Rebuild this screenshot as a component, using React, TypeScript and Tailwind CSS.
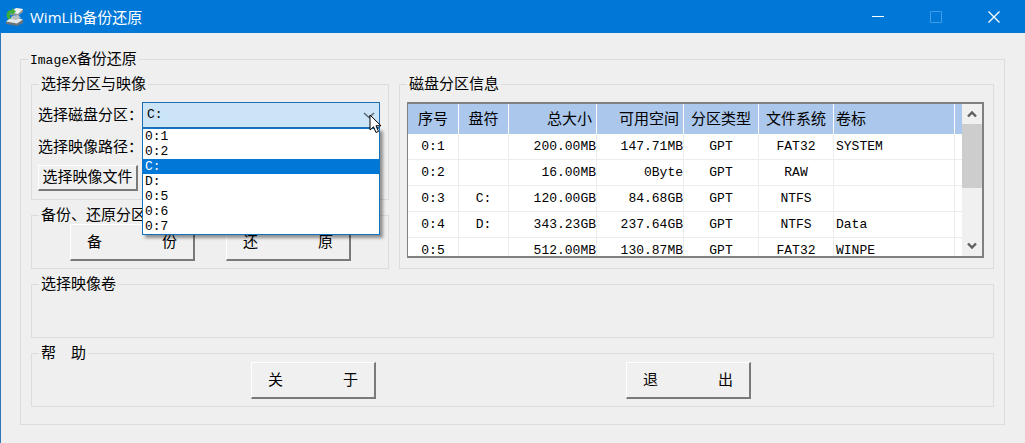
import React, { useState } from "react";

const drives = ["0:1", "0:2", "C:", "D:", "0:5", "0:6", "0:7"];

const partitions = [
  { id: "0:1", letter: "", total: "200.00MB", free: "147.71MB", type: "GPT", fs: "FAT32", label: "SYSTEM" },
  { id: "0:2", letter: "", total: "16.00MB", free: "0Byte", type: "GPT", fs: "RAW", label: "" },
  { id: "0:3", letter: "C:", total: "120.00GB", free: "84.68GB", type: "GPT", fs: "NTFS", label: "" },
  { id: "0:4", letter: "D:", total: "343.23GB", free: "237.64GB", type: "GPT", fs: "NTFS", label: "Data" },
  { id: "0:5", letter: "", total: "512.00MB", free: "130.87MB", type: "GPT", fs: "FAT32", label: "WINPE" },
];

const Group = ({
  title,
  className = "",
  children,
}: {
  title: React.ReactNode;
  className?: string;
  children?: React.ReactNode;
}) => (
  <fieldset className={`min-w-0 border border-[#dcdcdc] ${className}`}>
    <legend className="ml-[7px] px-[2px] h-4 leading-5 whitespace-pre">{title}</legend>
    {children}
  </fieldset>
);

const Button = ({ className = "", children }: { className?: string; children: React.ReactNode }) => (
  <button
    type="button"
    className={`bg-[#f0f0f0] border-t border-l border-r-2 border-b-2 border-t-white border-l-white border-r-[#7a7a7a] border-b-[#7a7a7a] whitespace-pre ${className}`}
  >
    {children}
  </button>
);

const AppIcon = () => (
  <svg width="20" height="20" viewBox="0 0 20 20" aria-hidden="true">
    <path d="M5 6 L12 1 L18 2 L18 5 L13 9 L5 8Z" fill="#8b959c" />
    <path d="M5 5 L11 1 L18 2 L13 7Z" fill="#eef1f2" />
    <path d="M1 15 L7 10 L18 13 L18 16 L12 19 L1 17Z" fill="#69747b" />
    <path d="M1 14.5 L7 10 L18 12.5 L12 16.5Z" fill="#e4e8ea" />
    <path d="M7 9 L13 8 L16 11 L11 13 L6 12Z" fill="#b7c0c5" />
    <path d="M3 12 C0 8 2 3 7 3 L7 1 L11 4.5 L7 8 L7 6 C5 6 4 8 6 12Z" fill="#3fae3a" />
  </svg>
);

const TitleBar = () => (
  <header className="flex items-center h-[33px] bg-[#0078d7] text-white">
    <div className="flex flex-1 items-center gap-[5px] pl-[5px]">
      <AppIcon />
      <h1 className="font-['Open_Sans','Noto_Sans_CJK_SC',sans-serif] text-[15px] leading-5">
        WimLib备份还原
      </h1>
    </div>
    <div className="flex h-full pr-[2px]">
      <button type="button" aria-label="最小化" className="flex w-[58px] items-center justify-center">
        <svg width="12" height="12" viewBox="0 0 12 12">
          <path d="M0 5.5H12" stroke="white" />
        </svg>
      </button>
      <button type="button" aria-label="最大化" disabled className="flex w-[58px] items-center justify-center">
        <svg width="12" height="12" viewBox="0 0 12 12" fill="none">
          <path d="M.5 .5H11.5V11.5H.5Z" stroke="#3f9ce8" />
        </svg>
      </button>
      <button type="button" aria-label="关闭" className="flex w-[58px] items-center justify-center">
        <svg width="12" height="12" viewBox="0 0 12 12">
          <path d="M.5 .5L11.5 11.5M11.5 .5L.5 11.5" stroke="white" strokeWidth="1.3" />
        </svg>
      </button>
    </div>
  </header>
);

const DriveSelect = ({ value, onChange }: { value: string; onChange: (v: string) => void }) => (
  <div className="relative flex-1">
    <select
      id="drive"
      value={value}
      onChange={(e) => onChange(e.target.value)}
      className="block w-full h-[26px] appearance-none border border-[#1f6cb0] bg-[#cce4f7] pl-1 text-[13px] outline-none"
    >
      {drives.map((d) => (
        <option key={d}>{d}</option>
      ))}
    </select>
    <svg className="absolute right-[5px] top-[10px] pointer-events-none" width="12" height="7" viewBox="0 0 12 7" fill="none">
      <path d="M1 1L6 5.5L11 1" stroke="#5a6670" strokeWidth="1.5" />
    </svg>
    <ul
      role="listbox"
      aria-label="选择磁盘分区"
      className="absolute z-10 left-0 right-0 top-full border border-[#0f74c4] bg-white text-[13px] leading-[15px] shadow-[3px_3px_3px_rgba(0,0,0,0.4)]"
    >
      {drives.map((d) => (
        <li
          key={d}
          role="option"
          aria-selected={d === value}
          onClick={() => onChange(d)}
          className={`h-[15px] pl-[2px] ${d === value ? "bg-[#0078d7] text-white" : ""}`}
        >
          {d}
        </li>
      ))}
    </ul>
    {/* mouse pointer */}
    <svg className="absolute z-20 -right-[2px] top-3 pointer-events-none" width="13" height="20" viewBox="0 0 13 20">
      <path
        d="M1 1V16L4.5 12.8L7 18.5L9.5 17.4L7 11.8H12Z"
        fill="white"
        stroke="black"
        strokeWidth="1"
      />
    </svg>
  </div>
);

const head = "h-[30px] p-0 pt-[3px] font-normal border-r border-white text-[15px]";
const cell = "h-[26px] p-0 border-r border-b border-[#ececec]";

const PartitionTable = () => (
  <div className="flex h-[156px] overflow-hidden border-t-2 border-r-2 border-b-2 border-l border-[#808080] bg-white">
    <div className="flex-1 min-w-0 overflow-hidden">
      <table className="w-full table-fixed border-separate border-spacing-0 text-[13px] leading-4 whitespace-nowrap">
        <colgroup>
          <col className="w-[51px]" />
          <col className="w-[50px]" />
          <col className="w-[88px]" />
          <col className="w-[87px]" />
          <col className="w-[75px]" />
          <col className="w-[75px]" />
          <col />
          <col className="w-[7px]" />
        </colgroup>
        <thead className="bg-[#abc7ec]">
          <tr>
            <th className={`${head} text-center`}>序号</th>
            <th className={`${head} text-center`}>盘符</th>
            <th className={`${head} pr-1 text-right`}>总大小</th>
            <th className={`${head} pr-1 text-right`}>可用空间</th>
            <th className={`${head} text-center`}>分区类型</th>
            <th className={`${head} text-center`}>文件系统</th>
            <th className={`${head} pl-[2px] text-left`}>卷标</th>
            <td className="p-0"></td>
          </tr>
        </thead>
        <tbody>
          {partitions.map((p) => (
            <tr key={p.id}>
              <td className={`${cell} text-center`}>{p.id}</td>
              <td className={`${cell} text-center`}>{p.letter}</td>
              <td className={`${cell} text-right`}>{p.total}</td>
              <td className={`${cell} text-right`}>{p.free}</td>
              <td className={`${cell} text-center`}>{p.type}</td>
              <td className={`${cell} text-center`}>{p.fs}</td>
              <td className={`${cell} pl-[2px]`}>{p.label}</td>
              <td className="p-0 border-b border-[#ececec]"></td>
            </tr>
          ))}
        </tbody>
      </table>
    </div>
    <div className="flex w-5 flex-col bg-[#f0f0f0]">
      <button type="button" aria-label="向上滚动" className="flex h-5 items-center justify-center">
        <svg width="10" height="8" viewBox="0 0 10 8" fill="none">
          <path d="M1 6.5L5 2.5L9 6.5" stroke="#606060" strokeWidth="2.4" />
        </svg>
      </button>
      <div className="flex-1">
        <div className="h-16 bg-[#cdcdcd]"></div>
      </div>
      <button type="button" aria-label="向下滚动" className="flex h-5 items-center justify-center">
        <svg width="10" height="8" viewBox="0 0 10 8" fill="none">
          <path d="M1 1.5L5 5.5L9 1.5" stroke="#606060" strokeWidth="2.4" />
        </svg>
      </button>
    </div>
  </div>
);

const App = () => {
  const [drive, setDrive] = useState("C:");

  return (
    <div className="flex min-h-screen flex-col bg-[#efefef] text-black font-['Liberation_Mono','Noto_Sans_CJK_SC',monospace] text-[15px] leading-4">
      <TitleBar />
      <main className="flex-1 border-l border-[#2f78b7] pt-[18px] pb-4 pl-[19px] pr-5">
        <Group
          title={
            <>
              <span className="text-[13px]">ImageX</span>备份还原
            </>
          }
        >
          <div className="flex flex-col gap-[7px] px-[10px] pt-[9px] pb-[17px]">
            <div className="grid grid-cols-[358px_1fr] gap-[10px]">
              <div className="flex flex-col gap-[7px]">
                <Group title="选择分区与映像">
                  <div className="flex flex-col gap-[6px] pl-[6px] pr-2 pt-[10px] pb-2">
                    <div className="flex items-center">
                      <label htmlFor="drive" className="w-26 pt-1 whitespace-nowrap">
                        选择磁盘分区：
                      </label>
                      <DriveSelect value={drive} onChange={setDrive} />
                    </div>
                    <div className="flex items-center">
                      <label htmlFor="image" className="w-26 pt-1 whitespace-nowrap">
                        选择映像路径：
                      </label>
                      <input
                        id="image"
                        type="text"
                        className="h-[25px] flex-1 min-w-0 border border-[#7a7a7a] bg-white px-1 text-[13px]"
                      />
                    </div>
                    <Button className="h-[26px] w-25 self-start pt-[2px]">选择映像文件</Button>
                  </div>
                </Group>
                <Group title="备份、还原分区">
                  <div className="flex gap-[31px] pl-[38px] pt-px pb-[7px]">
                    <Button className="h-[37px] w-[125px] pt-1">备{"　　　　"}份</Button>
                    <Button className="h-[37px] w-[125px] pt-1">还{"　　　　"}原</Button>
                  </div>
                </Group>
              </div>
              <Group title="磁盘分区信息">
                <div className="pl-[7px] pr-[9px] pt-[10px]">
                  <PartitionTable />
                </div>
              </Group>
            </div>
            <Group title="选择映像卷" className="min-h-[62px]" />
            <Group title="帮　助">
              <div className="flex gap-[250px] pl-[219px] pt-px pb-[7px]">
                <Button className="h-[37px] w-[125px] pt-1">关{"　　　　"}于</Button>
                <Button className="h-[37px] w-[125px] pt-1">退{"　　　　"}出</Button>
              </div>
            </Group>
          </div>
        </Group>
      </main>
    </div>
  );
};

export default App;
